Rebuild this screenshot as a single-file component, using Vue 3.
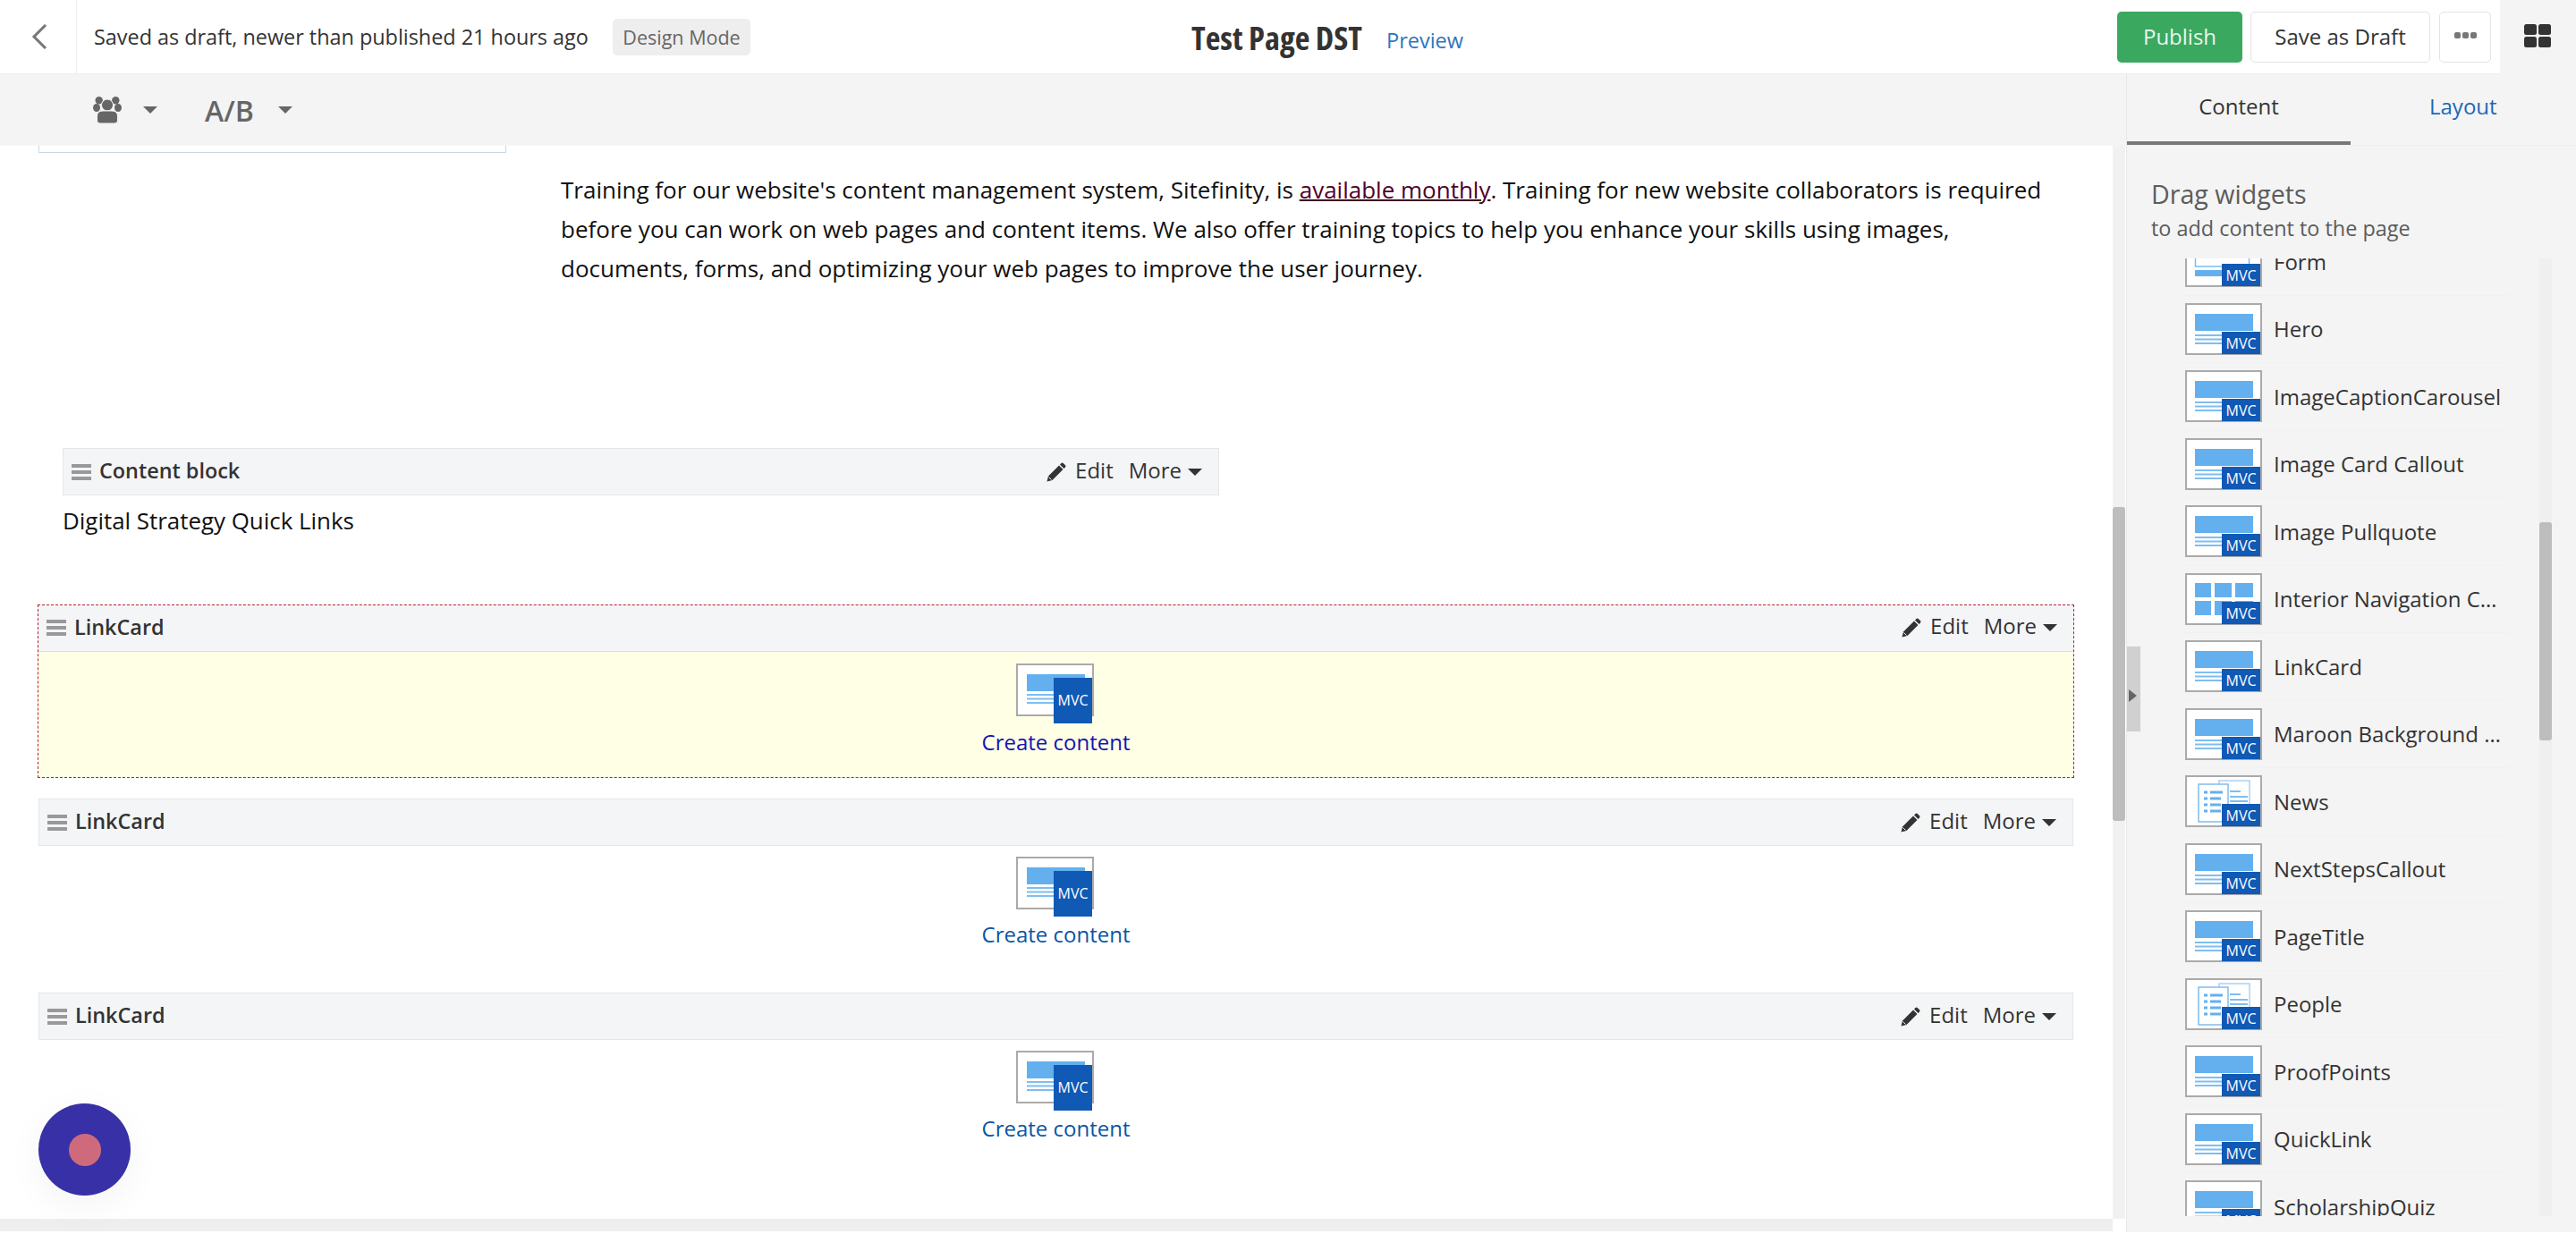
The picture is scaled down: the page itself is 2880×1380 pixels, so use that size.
<script setup>
const widgets = [
  { name: 'Form', kind: 'form' },
  { name: 'Hero', kind: 'hero' },
  { name: 'ImageCaptionCarousel', kind: 'hero' },
  { name: 'Image Card Callout', kind: 'hero' },
  { name: 'Image Pullquote', kind: 'hero' },
  { name: 'Interior Navigation Callout', kind: 'grid' },
  { name: 'LinkCard', kind: 'hero' },
  { name: 'Maroon Background Callout', kind: 'hero' },
  { name: 'News', kind: 'list' },
  { name: 'NextStepsCallout', kind: 'hero' },
  { name: 'PageTitle', kind: 'hero' },
  { name: 'People', kind: 'list' },
  { name: 'ProofPoints', kind: 'hero' },
  { name: 'QuickLink', kind: 'hero' },
  { name: 'ScholarshipQuiz', kind: 'hero' }
]
const cards = [
  { hot: true },
  { hot: false },
  { hot: false }
]
const pencilBody = 'M0.5 21.5 L2 15.5 L14 3.5 L18.5 8 L6.5 20 Z'
const pencilEnd = 'M15 2.5 L16.5 1 Q17.6 0 18.8 1 L21 3.2 Q22 4.3 21 5.4 L19.5 7 Z'
</script>

<template>
  <div class="app">
    <header class="top">
      <div class="back">
        <svg width="18" height="28" viewBox="0 0 18 28"><path d="M16 1 L3 14 L16 27" fill="none" stroke="#777" stroke-width="3"/></svg>
      </div>
      <div class="status">Saved as draft, newer than published 21 hours ago</div>
      <div class="badge">Design Mode</div>
      <div class="title"><span class="title-text">Test Page DST</span><a class="preview">Preview</a></div>
      <button class="btn publish">Publish</button>
      <button class="btn draft">Save as Draft</button>
      <button class="btn dots"><i></i><i></i><i></i></button>
      <div class="apps">
        <svg width="30" height="26" viewBox="0 0 30 26"><g fill="#333"><rect width="14" height="12" rx="2.5"/><rect x="16" width="14" height="12" rx="2.5"/><rect y="14" width="14" height="12" rx="2.5"/><rect x="16" y="14" width="14" height="12" rx="2.5"/></g></svg>
      </div>
    </header>
    <div class="body">
      <div class="left">
        <div class="tools">
          <svg class="people" width="32" height="30" viewBox="0 0 32 30"><g fill="#666"><circle cx="6.7" cy="4.2" r="4.2"/><circle cx="25.3" cy="4.2" r="4.2"/><ellipse cx="4" cy="12.5" rx="4" ry="4.5"/><ellipse cx="28" cy="12.5" rx="4" ry="4.5"/><circle cx="16" cy="9.5" r="6.5" stroke="#f4f4f4" stroke-width="1"/><path d="M4.5 27 V22 Q4.5 16 11 16 H21 Q27.5 16 27.5 22 V27 Q27.5 30 24 30 H8 Q4.5 30 4.5 27 Z" stroke="#f4f4f4" stroke-width="1"/></g></svg>
          <span class="caret tool-caret first"></span>
          <span class="ab">A/B</span>
          <span class="caret tool-caret"></span>
        </div>
        <div class="viewport">
          <main class="main">
            <div class="stub"></div>
            <p class="para">Training for our website's content management system, Sitefinity, is <a class="maroon">available monthly</a>. Training for new website collaborators is required before you can work on web pages and content items. We also offer training topics to help you enhance your skills using images, documents, forms, and optimizing your web pages to improve the user journey.</p>
            <div class="block">
              <div class="bar">
                <span class="grip"><i></i><i></i><i></i></span>
                <span class="bar-name">Content block</span>
                <span class="actions">
                  <svg class="pen" width="22" height="22" viewBox="0 0 22 22"><path :d="pencilBody" fill="#333"/><path :d="pencilEnd" fill="#333"/><path d="M2.5 16.5l3 3" stroke="#f4f5f7" stroke-width="1"/></svg>
                  <span class="edit">Edit</span>
                  <span class="more">More</span>
                  <span class="caret dark"></span>
                </span>
              </div>
              <div class="quick">Digital Strategy Quick Links</div>
            </div>
            <section v-for="(c, i) in cards" :key="i" class="card" :class="{ hot: c.hot }">
              <div class="bar">
                <span class="grip"><i></i><i></i><i></i></span>
                <span class="bar-name">LinkCard</span>
                <span class="actions">
                  <svg class="pen" width="22" height="22" viewBox="0 0 22 22"><path :d="pencilBody" fill="#333"/><path :d="pencilEnd" fill="#333"/><path d="M2.5 16.5l3 3" stroke="#f4f5f7" stroke-width="1"/></svg>
                  <span class="edit">Edit</span>
                  <span class="more">More</span>
                  <span class="caret dark"></span>
                </span>
              </div>
              <div class="card-body">
                <svg class="big-icon" width="88" height="68" viewBox="0 0 88 68">
                  <rect x="1" y="1" width="85" height="57" fill="#fff" stroke="#aaa" stroke-width="2"/>
                  <rect x="12" y="12" width="65" height="19" fill="#64b0ef"/>
                  <path d="M12 35H45M12 39.5H45M12 44H45" stroke="#7fbdf0" stroke-width="2"/>
                  <rect x="42" y="16" width="43" height="51" fill="#1059b5"/>
                  <text x="63.5" y="47" class="mvc" text-anchor="middle">MVC</text>
                </svg>
                <a class="create">Create content</a>
              </div>
            </section>
          </main>
          <div class="vbar"><div class="vthumb"></div></div>
        </div>
        <div class="hbar"></div>
      </div>
      <aside class="panel">
        <div class="handle"><span class="tri"></span></div>
        <nav class="tabs">
          <div class="tab active">Content</div>
          <div class="tab link">Layout</div>
        </nav>
        <div class="drag">
          <div class="drag-title">Drag widgets</div>
          <div class="drag-sub">to add content to the page</div>
        </div>
        <div class="list-wrap">
          <ul class="list">
            <li v-for="w in widgets" :key="w.name" class="row">
              <svg class="w-icon" width="86" height="58" viewBox="0 0 86 58">
                <rect x="1" y="1" width="84" height="56" fill="#fff" stroke="#aaa" stroke-width="2"/>
                <template v-if="w.kind === 'hero'">
                  <rect x="11" y="12" width="65" height="19" fill="#64b0ef"/>
                  <path d="M11 36H42M11 40.5H42M11 45H42" stroke="#7fbdf0" stroke-width="2"/>
                </template>
                <template v-else-if="w.kind === 'form'">
                  <rect x="11" y="12" width="65" height="7" fill="#64b0ef"/>
                  <rect x="11.5" y="22" width="60" height="13" fill="none" stroke="#7fbdf0" stroke-width="1.5"/>
                  <rect x="11" y="39" width="35" height="7" fill="#64b0ef"/>
                </template>
                <template v-else-if="w.kind === 'grid'">
                  <g fill="#64b0ef"><rect x="11" y="11" width="18" height="16"/><rect x="33" y="11" width="19" height="16"/><rect x="56" y="11" width="20" height="16"/><rect x="11" y="31" width="18" height="16"/><rect x="33" y="31" width="19" height="16"/><rect x="56" y="31" width="20" height="16"/></g>
                </template>
                <template v-else>
                  <rect x="38" y="6" width="34" height="42" fill="#fff" stroke="#a9d2f3" stroke-width="1.5"/>
                  <rect x="15" y="10" width="33" height="42" fill="#fff" stroke="#7fbdf0" stroke-width="1.5"/>
                  <path d="M21 19h4M28 19h14M21 26h4M28 26h12M21 33h4M28 33h12M21 40h4M28 40h12" stroke="#64b0ef" stroke-width="3"/>
                  <path d="M50 18h12M50 24h20M50 29h20M50 34h20" stroke="#7fbdf0" stroke-width="2"/>
                </template>
                <rect x="41" y="32" width="43" height="25" fill="#1059b5"/>
                <text x="62.5" y="51" class="mvc" text-anchor="middle">MVC</text>
              </svg>
              <span class="w-name">{{ w.name }}</span>
            </li>
          </ul>
          <div class="list-bar"><div class="list-thumb"></div></div>
        </div>
      </aside>
    </div>
    <div class="bubble"><span></span></div>
  </div>
</template>

<style>
html, body { margin: 0; padding: 0; background: #fff; }
</style>

<style scoped>
.app {
  position: relative;
  width: 2880px;
  height: 1380px;
  overflow: hidden;
  display: flex;
  flex-direction: column;
  font-family: "Open Sans", "Noto Sans", sans-serif;
  font-size: 24px;
  color: #333;
  background: #fff;
}
.top {
  height: 83px;
  flex: none;
  display: flex;
  align-items: center;
  border-bottom: 1px solid #eee;
  box-sizing: border-box;
  position: relative;
}
.back {
  width: 86px;
  height: 83px;
  flex: none;
  box-sizing: border-box;
  border-right: 1px solid #eee;
  display: flex;
  align-items: center;
  padding-left: 35px;
}
.status { margin-left: 19px; white-space: nowrap; width: 553px; font-size: 23.4px; }
.badge {
  margin-left: 27px;
  width: 154px;
  height: 41px;
  box-sizing: border-box;
  background: #eee;
  border-radius: 5px;
  color: #666;
  font-size: 21.5px;
  display: flex;
  align-items: center;
  justify-content: center;
}
.title {
  position: absolute;
  left: 1332px;
  top: 0;
  height: 83px;
  display: flex;
  align-items: center;
  white-space: nowrap;
}
.title-text {
  font-size: 36.5px;
  font-weight: 700;
  font-stretch: 75%;
  color: #333;
  width: 191px;
  display: inline-block;
}
.preview { color: #2f75bd; margin-left: 27px; margin-top: 7px; font-size: 23.5px; }
.btn {
  font-family: inherit;
  font-size: 24px;
  height: 57px;
  box-sizing: border-box;
  border-radius: 5px;
  flex: none;
  cursor: pointer;
  padding: 0 0 2px;
}
.publish {
  margin-left: auto;
  width: 140px;
  background: #3aa85f;
  color: #e9f7ee;
  border: 0;
}
.draft {
  margin-left: 9px;
  width: 201px;
  background: #fff;
  color: #333;
  border: 1px solid #e3e3e3;
}
.dots {
  margin-left: 10px;
  width: 58px;
  background: #fff;
  border: 1px solid #e3e3e3;
  display: flex;
  align-items: center;
  justify-content: center;
  gap: 2px;
  padding-bottom: 4px;
}
.dots i { width: 7px; height: 7px; border-radius: 2px; background: #777; display: block; }
.apps {
  margin-left: 10px;
  width: 85px;
  height: 83px;
  background: #f4f4f4;
  display: flex;
  align-items: flex-start;
  padding: 27px 0 0 27px;
  box-sizing: border-box;
  flex: none;
}
.body { flex: 1; min-height: 0; display: flex; }
.left { width: 2377px; flex: none; display: flex; flex-direction: column; height: 1295px; }
.tools {
  height: 80px;
  flex: none;
  background: #f4f4f4;
  display: flex;
  align-items: center;
  padding-left: 104px;
  color: #666;
}
.caret {
  display: inline-block;
  width: 0;
  height: 0;
  border-left: 8px solid transparent;
  border-right: 8px solid transparent;
  border-top: 8px solid #666;
}
.tool-caret.first { margin-left: 24px; }
.ab { margin-left: 53px; font-size: 32px; font-weight: 600; margin-right: 27px; color: #666; }
.viewport { flex: 1; min-height: 0; display: flex; }
.main { flex: 1; min-width: 0; overflow: hidden; height: 100%; }
.stub {
  margin-left: 43px;
  width: 523px;
  height: 8px;
  box-sizing: border-box;
  border: 1px solid #c9d9e2;
  border-top: 0;
}
.para {
  margin: 19px 0 0 627px;
  width: 1670px;
  font-size: 26px;
  line-height: 44px;
  color: #111;
}
.maroon { color: #500028; text-decoration: underline; text-decoration-thickness: 2px; text-decoration-color: #3d0020; }
.block { margin: 179px 0 0 70px; width: 1293px; }
.bar {
  height: 53px;
  box-sizing: border-box;
  background: #f4f5f7;
  border: 1px solid #e4e6ea;
  display: flex;
  align-items: center;
  padding-left: 9px;
  padding-right: 18px;
}
.grip { display: flex; flex-direction: column; gap: 3px; width: 22px; }
.grip i { display: block; height: 4px; background: #999; }
.bar-name { margin-left: 9px; margin-top: -3px; font-weight: 600; font-size: 23.4px; color: #333; }
.actions { margin-left: auto; display: flex; align-items: center; color: #333; }
.edit { margin-left: 10px; margin-top: -5px; }
.more { margin-left: 17px; margin-top: -5px; }
.caret.dark { border-top-color: #333; margin-left: 7px; }
.quick { margin-top: 10px; font-size: 25.9px; color: #111; line-height: 36px; }
.card { margin: 0 0 0 43px; width: 2275px; height: 217px; box-sizing: border-box; }
.block + .card { margin-top: 76px; }
.card.hot {
  height: 194px;
  margin-left: 42px;
  width: 2277px;
  margin-bottom: 23px;
  outline: 1px dashed #b22234;
  outline-offset: -1px;
  background: #ffffe6;
}
.card.hot .bar { border: 0; border-bottom: 1px solid #ddd; background: #f4f5f7; padding-left: 10px; padding-right: 19px; }
.card-body {
  display: flex;
  flex-direction: column;
  align-items: center;
  padding-top: 12px;
}
.hot .card-body { padding-top: 13px; }
.big-icon { display: block; margin-left: -2px; }
.mvc { font: 500 16px "Open Sans", sans-serif; fill: #fff; }
.create { color: #0b55a5; margin-top: 2px; line-height: 34px; }
.hot .create { color: #1414b0; margin-top: 3px; }
.vbar { width: 14px; flex: none; background: #f1f1f1; position: relative; margin-right: 1px; }
.vthumb { position: absolute; left: 0; right: 0; top: 404px; height: 351px; background: #bdbdbd; border-radius: 3px; }
.hbar { height: 14px; flex: none; background: #eee; margin-right: 15px; margin-bottom: 1px; margin-top: 0; }
.panel {
  flex: 1;
  min-width: 0;
  height: 1295px;
  background: #f4f4f4;
  border-left: 1px solid #e8e8e8;
  box-sizing: border-box;
  position: relative;
  display: flex;
  flex-direction: column;
}
.handle {
  position: absolute;
  left: 0;
  top: 640px;
  width: 15px;
  height: 95px;
  background: #d0d0d0;
  display: flex;
  align-items: center;
}
.tri {
  width: 0;
  height: 0;
  margin: 14px 0 0 2px;
  border-top: 7px solid transparent;
  border-bottom: 7px solid transparent;
  border-left: 9px solid #666;
}
.tabs { height: 80px; flex: none; display: flex; border-bottom: 1px solid #eee; box-sizing: border-box; }
.tab { width: 250px; height: 79px; box-sizing: border-box; text-align: center; padding-top: 19px; }
.tab.active { border-bottom: 4px solid #777; }
.tab.link { color: #1c68b8; text-align: left; padding-left: 88px; }
.drag { padding: 34px 0 0 27px; height: 126px; box-sizing: border-box; flex: none; }
.drag-title { font-size: 28.6px; line-height: 40px; color: #5c5c5c; }
.drag-sub { font-size: 23.4px; line-height: 36px; color: #5c5c5c; }
.list-wrap { height: 1071px; flex: none; position: relative; overflow: hidden; }
.list { list-style: none; margin: -34px 0 0 58px; padding: 0; width: 370px; }
.row {
  height: 75.5px;
  box-sizing: border-box;
  display: flex;
  align-items: center;
  padding-left: 7px;
  border-bottom: 1px solid #f1f1f1;
}
.w-icon { flex: none; display: block; }
.w-name {
  margin-left: 13px;
  width: 258px;
  white-space: nowrap;
  overflow: hidden;
  text-overflow: ellipsis;
  color: #333;
}
.list-bar { position: absolute; left: 461px; top: 0; bottom: 0; width: 14px; background: #efefef; }
.list-thumb { position: absolute; left: 0; right: 0; top: 295px; height: 244px; background: #bdbdbd; border-radius: 3px; }
.bubble {
  position: absolute;
  left: 43px;
  top: 1234px;
  width: 103px;
  height: 103px;
  border-radius: 50%;
  background: #3830a6;
  box-shadow: 0 10px 40px rgba(0, 0, 0, 0.05);
  display: flex;
  align-items: center;
  justify-content: center;
}
.bubble span { width: 36px; height: 36px; border-radius: 50%; background: #cf6a7d; }
</style>
